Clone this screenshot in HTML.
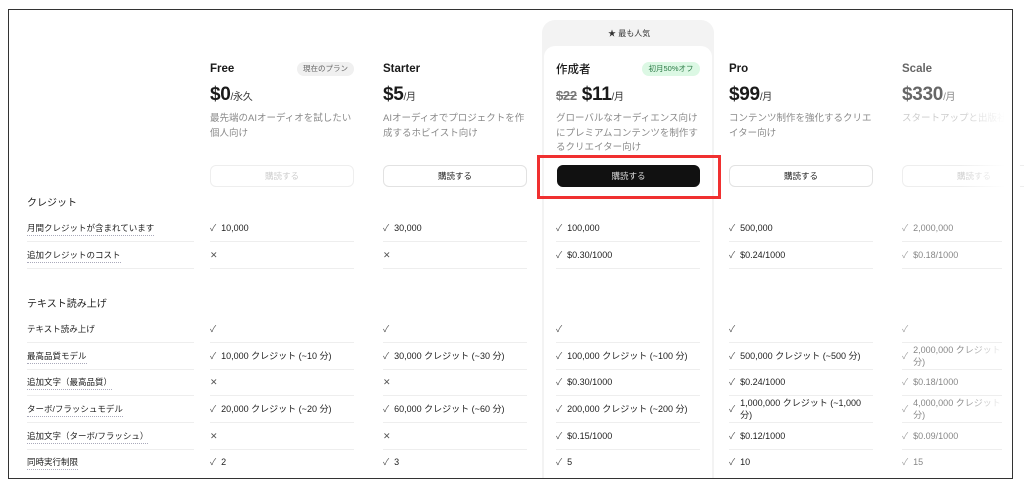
<!DOCTYPE html>
<html><head><meta charset="utf-8"><style>
*{margin:0;padding:0;box-sizing:border-box}
body{width:1024px;height:483px;background:#fff;position:relative;overflow:hidden;font-family:"Liberation Sans","Noto Sans CJK JP",sans-serif;color:#1a1a1a}
.frame{position:absolute;left:8px;top:9px;width:1005px;height:470px;border:1.5px solid #333;overflow:hidden}
.a{position:absolute;white-space:nowrap}
.name{font-size:11.5px;font-weight:600;top:63px}
.price{font-size:19px;font-weight:700;top:84px;letter-spacing:-0.3px}
.price small{font-size:10px;font-weight:400;color:#333}
.desc{font-size:9.5px;color:#8a8a8a;top:112px;line-height:14.5px;white-space:normal;width:148px}
.btn{position:absolute;top:165px;width:144px;height:22px;border:1px solid #e2e2e2;border-radius:6px;font-size:8.5px;text-align:center;line-height:20px;color:#222;background:#fff}
.btn.dis{color:#ccc;border-color:#eee}
.sec{font-size:10px;left:27px;color:#222}
.lab{font-size:8.5px;left:27px;color:#222;border-bottom:1px dotted #aab;padding-bottom:1px}
.c{font-size:9px;color:#222;line-height:12px}
.c b{font-weight:400;color:#555;margin-right:5px;font-size:9px}
.sep{position:absolute;height:1px;background:#eee}
</style></head><body>
<div style="position:absolute;left:542px;top:20px;width:172px;height:459px;background:#f3f3f3;border-radius:13px 13px 0 0"></div>
<div style="position:absolute;left:544px;top:46px;width:168px;height:433px;background:#fff;border-radius:11px 11px 0 0"></div>
<div class="a" style="left:608px;top:28px;font-size:8px;color:#333">★ 最も人気</div>

<div class="a name" style="left:210px">Free</div>
<div class="a" style="left:297px;top:62px;width:57px;height:14px;border-radius:7px;background:#f0f0f0;font-size:7.5px;color:#666;text-align:center;line-height:14px">現在のプラン</div>
<div class="a name" style="left:383px">Starter</div>
<div class="a name" style="left:556px;font-weight:500;top:61px">作成者</div>
<div class="a" style="left:642px;top:62px;width:58px;height:14px;border-radius:7px;background:#dcf8e4;font-size:7.5px;color:#2a7a45;text-align:center;line-height:14px">初月50%オフ</div>
<div class="a name" style="left:729px">Pro</div>
<div class="a name" style="left:902px;color:#666">Scale</div>

<div class="a price" style="left:210px">$0<small>/永久</small></div>
<div class="a price" style="left:383px">$5<small>/月</small></div>
<div class="a price" style="left:556px"><span style="font-size:13px;font-weight:600;color:#777;text-decoration:line-through">$22</span> $11<small>/月</small></div>
<div class="a price" style="left:729px">$99<small>/月</small></div>
<div class="a price" style="left:902px;color:#666">$330<small style="color:#888">/月</small></div>

<div class="a desc" style="left:210px">最先端のAIオーディオを試したい個人向け</div>
<div class="a desc" style="left:383px;width:150px">AIオーディオでプロジェクトを作成するホビイスト向け</div>
<div class="a desc" style="left:556px;width:146px">グローバルなオーディエンス向けにプレミアムコンテンツを制作するクリエイター向け</div>
<div class="a desc" style="left:729px;width:148px">コンテンツ制作を強化するクリエイター向け</div>
<div class="a desc" style="left:902px;color:#ccc;width:200px">スタートアップと出版社</div>

<div class="btn dis" style="left:210px">購読する</div>
<div class="btn" style="left:383px">購読する</div>
<div class="btn" style="left:557px;width:143px;background:#111;border-color:#111;color:#ddd">購読する</div>
<div class="btn" style="left:729px">購読する</div>
<div class="btn dis" style="left:902px">購読する</div>
<div style="position:absolute;left:537px;top:155px;width:184px;height:44px;border:3px solid #f03030"></div>

<div class="a sec" style="top:194px">クレジット</div>
<div class="a sec" style="top:295px">テキスト読み上げ</div>

<div class="a lab" style="top:222px">月間クレジットが含まれています</div>
<div class="a lab" style="top:249px">追加クレジットのコスト</div>
<div class="a lab" style="top:323px;border:none">テキスト読み上げ</div>
<div class="a lab" style="top:350px">最高品質モデル</div>
<div class="a lab" style="top:376px">追加文字（最高品質）</div>
<div class="a lab" style="top:403px">ターボ/フラッシュモデル</div>
<div class="a lab" style="top:430px">追加文字（ターボ/フラッシュ）</div>
<div class="a lab" style="top:456px">同時実行制限</div>

<div class="sep" style="left:27px;top:241px;width:167px"></div>
<div class="sep" style="left:27px;top:268px;width:167px"></div>
<div class="sep" style="left:27px;top:342px;width:167px"></div>
<div class="sep" style="left:27px;top:369px;width:167px"></div>
<div class="sep" style="left:27px;top:395px;width:167px"></div>
<div class="sep" style="left:27px;top:422px;width:167px"></div>
<div class="sep" style="left:27px;top:449px;width:167px"></div>

<div class="a c" style="left:210px;top:222px"><b>✓</b>10,000</div>
<div class="a c" style="left:210px;top:249px"><b>✕</b></div>
<div class="a c" style="left:210px;top:323px"><b>✓</b></div>
<div class="a c" style="left:210px;top:350px"><b>✓</b>10,000 クレジット (~10 分)</div>
<div class="a c" style="left:210px;top:376px"><b>✕</b></div>
<div class="a c" style="left:210px;top:403px"><b>✓</b>20,000 クレジット (~20 分)</div>
<div class="a c" style="left:210px;top:430px"><b>✕</b></div>
<div class="a c" style="left:210px;top:456px"><b>✓</b>2</div>

<div class="a c" style="left:383px;top:222px"><b>✓</b>30,000</div>
<div class="a c" style="left:383px;top:249px"><b>✕</b></div>
<div class="a c" style="left:383px;top:323px"><b>✓</b></div>
<div class="a c" style="left:383px;top:350px"><b>✓</b>30,000 クレジット (~30 分)</div>
<div class="a c" style="left:383px;top:376px"><b>✕</b></div>
<div class="a c" style="left:383px;top:403px"><b>✓</b>60,000 クレジット (~60 分)</div>
<div class="a c" style="left:383px;top:430px"><b>✕</b></div>
<div class="a c" style="left:383px;top:456px"><b>✓</b>3</div>

<div class="a c" style="left:556px;top:222px"><b>✓</b>100,000</div>
<div class="a c" style="left:556px;top:249px"><b>✓</b>$0.30/1000</div>
<div class="a c" style="left:556px;top:323px"><b>✓</b></div>
<div class="a c" style="left:556px;top:350px"><b>✓</b>100,000 クレジット (~100 分)</div>
<div class="a c" style="left:556px;top:376px"><b>✓</b>$0.30/1000</div>
<div class="a c" style="left:556px;top:403px"><b>✓</b>200,000 クレジット (~200 分)</div>
<div class="a c" style="left:556px;top:430px"><b>✓</b>$0.15/1000</div>
<div class="a c" style="left:556px;top:456px"><b>✓</b>5</div>

<div class="a c" style="left:729px;top:222px"><b>✓</b>500,000</div>
<div class="a c" style="left:729px;top:249px"><b>✓</b>$0.24/1000</div>
<div class="a c" style="left:729px;top:323px"><b>✓</b></div>
<div class="a c" style="left:729px;top:350px"><b>✓</b>500,000 クレジット (~500 分)</div>
<div class="a c" style="left:729px;top:376px"><b>✓</b>$0.24/1000</div>
<div class="a c" style="left:729px;top:397px"><b style="position:relative;top:6px">✓</b><span style="display:inline-block;vertical-align:top">1,000,000 クレジット (~1,000<br>分)</span></div>
<div class="a c" style="left:729px;top:430px"><b>✓</b>$0.12/1000</div>
<div class="a c" style="left:729px;top:456px"><b>✓</b>10</div>

<div style="opacity:.55">
<div class="a c" style="left:902px;top:222px"><b>✓</b>2,000,000</div>
<div class="a c" style="left:902px;top:249px"><b>✓</b>$0.18/1000</div>
<div class="a c" style="left:902px;top:323px"><b>✓</b></div>
<div class="a c" style="left:902px;top:344px"><b style="position:relative;top:6px">✓</b><span style="display:inline-block;vertical-align:top">2,000,000 クレジット<br>分)</span></div>
<div class="a c" style="left:902px;top:376px"><b>✓</b>$0.18/1000</div>
<div class="a c" style="left:902px;top:397px"><b style="position:relative;top:6px">✓</b><span style="display:inline-block;vertical-align:top">4,000,000 クレジット<br>分)</span></div>
<div class="a c" style="left:902px;top:430px"><b>✓</b>$0.09/1000</div>
<div class="a c" style="left:902px;top:456px"><b>✓</b>15</div>
</div>
<div style="position:absolute;left:960px;top:0;width:60px;height:483px;background:linear-gradient(to right,rgba(255,255,255,0),#fff 75%)"></div>

<div class="sep" style="left:210px;top:241px;width:144px"></div><div class="sep" style="left:383px;top:241px;width:144px"></div><div class="sep" style="left:556px;top:241px;width:144px"></div><div class="sep" style="left:729px;top:241px;width:144px"></div><div class="sep" style="left:902px;top:241px;width:100px"></div>
<div class="sep" style="left:210px;top:268px;width:144px"></div><div class="sep" style="left:383px;top:268px;width:144px"></div><div class="sep" style="left:556px;top:268px;width:144px"></div><div class="sep" style="left:729px;top:268px;width:144px"></div><div class="sep" style="left:902px;top:268px;width:100px"></div>
<div class="sep" style="left:210px;top:342px;width:144px"></div><div class="sep" style="left:383px;top:342px;width:144px"></div><div class="sep" style="left:556px;top:342px;width:144px"></div><div class="sep" style="left:729px;top:342px;width:144px"></div><div class="sep" style="left:902px;top:342px;width:100px"></div>
<div class="sep" style="left:210px;top:369px;width:144px"></div><div class="sep" style="left:383px;top:369px;width:144px"></div><div class="sep" style="left:556px;top:369px;width:144px"></div><div class="sep" style="left:729px;top:369px;width:144px"></div><div class="sep" style="left:902px;top:369px;width:100px"></div>
<div class="sep" style="left:210px;top:395px;width:144px"></div><div class="sep" style="left:383px;top:395px;width:144px"></div><div class="sep" style="left:556px;top:395px;width:144px"></div><div class="sep" style="left:729px;top:395px;width:144px"></div><div class="sep" style="left:902px;top:395px;width:100px"></div>
<div class="sep" style="left:210px;top:422px;width:144px"></div><div class="sep" style="left:383px;top:422px;width:144px"></div><div class="sep" style="left:556px;top:422px;width:144px"></div><div class="sep" style="left:729px;top:422px;width:144px"></div><div class="sep" style="left:902px;top:422px;width:100px"></div>
<div class="sep" style="left:210px;top:449px;width:144px"></div><div class="sep" style="left:383px;top:449px;width:144px"></div><div class="sep" style="left:556px;top:449px;width:144px"></div><div class="sep" style="left:729px;top:449px;width:144px"></div><div class="sep" style="left:902px;top:449px;width:100px"></div>

<div class="frame"></div>
</body></html>
